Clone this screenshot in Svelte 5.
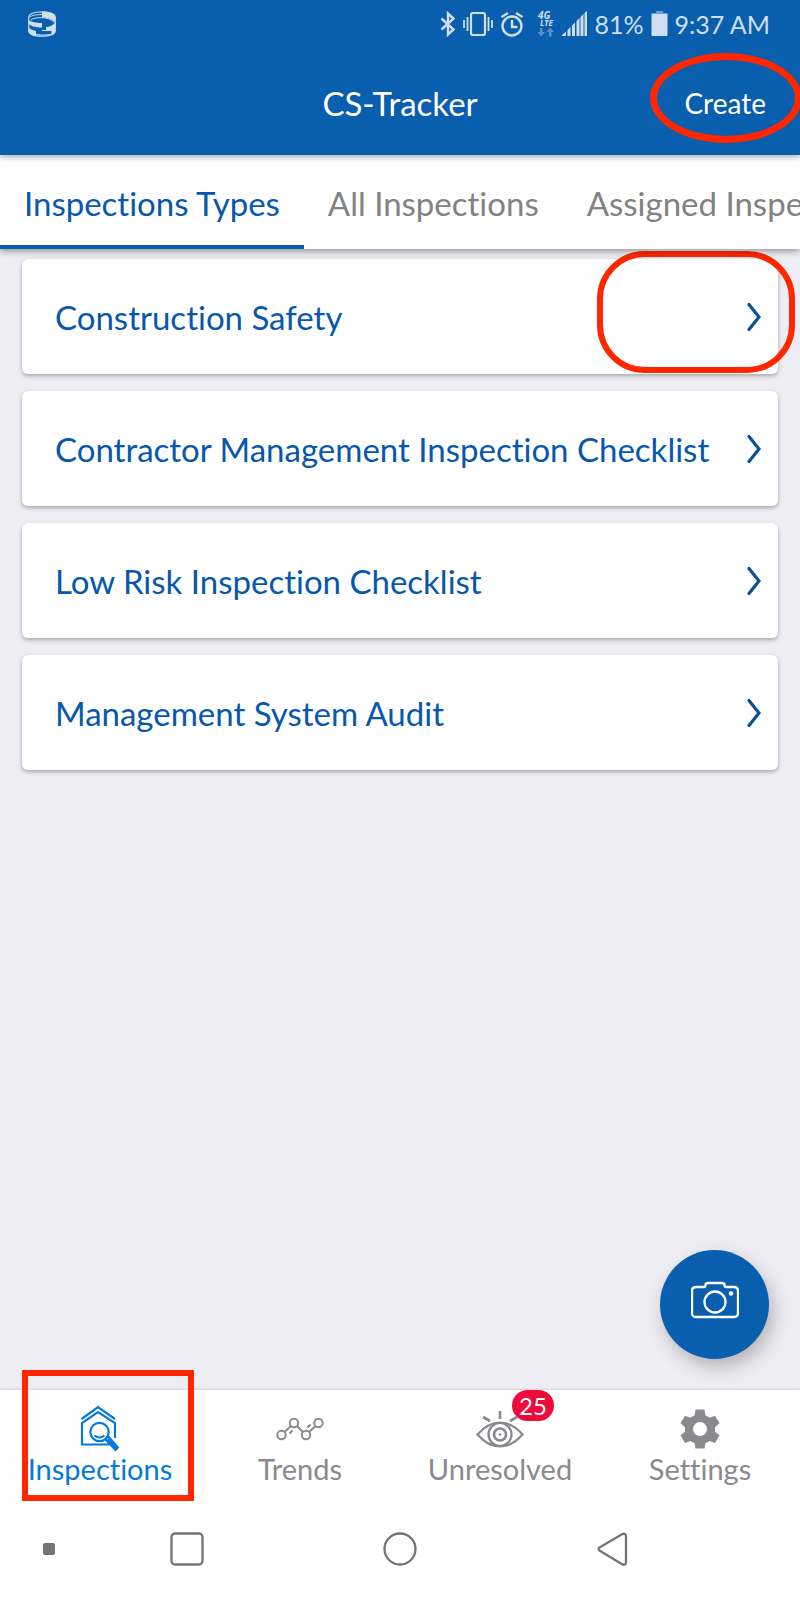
<script>
  const tabs = ["Inspections Types", "All Inspections", "Assigned Inspections"];

  const types = [
    "Construction Safety",
    "Contractor Management Inspection Checklist",
    "Low Risk Inspection Checklist",
    "Management System Audit",
  ];

  let activeTab = $state(0);
</script>

<div class="app">
  <header class="header">
    <div class="status">
      <svg width="28" height="26" viewBox="0 0 28 26" fill="none">
        <path
          d="M.8 6.500v13C.8 23 6 25.200 14 25.200S27.200 23 27.200 19.500v-13C27.200 3 22 .8 14 .8S.8 3 .8 6.500z"
          stroke="currentColor"
          stroke-width="1.200" />
        <path
          d="M14 .5c8 0 13.500 2.500 13.500 6V12C26 9 21 6.500 14 6.500zM.5 9C3 11 8 12 14 12v4.500C7 16.500 2 15 .5 12zM.5 16.500C3 19 6 19.500 8 20v5c-4-.5-7.500-2.500-7.500-5zM27.500 11v9c0 2.500-2 3.800-4 4.500V20H14v-1h4v-3q6 0 9.500-5z"
          fill="currentColor" />
        <path d="M3 9c3-3 17-4 23 2M2 6c2-2 6-2 12-2.500M8 23.500c6 .8 12 .8 16-.5" stroke="currentColor" />
      </svg>

      <div class="indicators">
        <svg width="16" height="26" viewBox="0 0 16 26" fill="none" stroke="currentColor" stroke-width="2.400">
          <path d="M1.500 7.500l12 11L8 23.500v-21l5.500 5-12 11" />
        </svg>
        <svg width="30" height="26" viewBox="0 0 30 26" fill="none" stroke="currentColor" stroke-width="2.200">
          <rect x="8" y="2" width="14" height="22" rx="2" />
          <path d="M4.500 6v14M1 9v8M25.500 6v14M29 9v8" stroke-width="1.800" />
        </svg>
        <svg width="24" height="26" viewBox="0 0 24 26" fill="none" stroke="currentColor" stroke-width="2.400">
          <circle cx="12" cy="15" r="9.500" />
          <path d="M12 9v7h5.500M1.500 6L8 2M22.500 6L16 2" />
        </svg>
        <svg class="network" width="24" height="26" viewBox="0 0 24 26" fill="currentColor">
          <text x="7" y="8" font-size="10">4G</text>
          <text x="9" y="15" font-size="8">LTE</text>
          <path d="M9 17h2.500v4h2.500l-3.800 4.500L6.500 21H9zM18 25.500h2.500V21H23L19.200 16.500 15.500 21H18z" opacity=".4" />
        </svg>
        <svg width="26" height="26" viewBox="0 0 26 26" fill="currentColor">
          <path d="M0 25v-1l4-3.500V25zM5.500 25v-6l3-3v9zM10 25V14.500l3-3V25zM14.500 25V10l3-3v18zM18.500 25V6l3-3v22zM22.500 25V2L25 0v25z" />
        </svg>
        <span>81%</span>
        <svg width="17" height="26" viewBox="0 0 17 26" fill="currentColor">
          <path d="M5 0h7v2h4.500v2H.5V2H5z" opacity=".5" />
          <rect x=".5" y="3" width="16" height="22" rx="1" />
        </svg>
        <span>9:37 AM</span>
      </div>
    </div>

    <div class="titlebar">
      <h1>CS-Tracker</h1>
      <button class="create">Create</button>
    </div>
  </header>

  <nav class="tabs">
    {#each tabs as tab, i}
      <button class="tab" class:active={activeTab === i} onclick={() => (activeTab = i)}>{tab}</button>
    {/each}
  </nav>

  <main class="content">
    <ul class="list">
      {#each types as type, i}
        <li>
          <button class="card" class:marked={i === 0}>
            <span>{type}</span>
            <svg width="14" height="30" viewBox="0 0 14 30" fill="none">
              <path d="M2 2.500L12 15 2 27.500" stroke="#0a4f98" stroke-width="3.200" stroke-linecap="round" />
            </svg>
          </button>
        </li>
      {/each}
    </ul>

    <button class="camera" aria-label="Take photo">
      <svg width="48" height="38" viewBox="0 0 48 38" fill="none" stroke="#fff" stroke-width="2.300">
        <path d="M5 6h8q1.500 0 1.500-2T17 2h14q2.500 0 2.500 2T35 6h8q4 0 4 4v22q0 4-4 4H5q-4 0-4-4V10q0-4 4-4z" />
        <circle cx="24" cy="21" r="10.500" />
        <circle cx="40" cy="12.500" r="2.300" fill="#fff" stroke="none" />
      </svg>
    </button>
  </main>

  <nav class="bottom">
    <a class="item current" href="#inspections">
      <svg width="48" height="48" viewBox="0 0 48 48" fill="none" stroke="currentColor" stroke-width="2.200">
        <path d="M5.500 15L22 3l17 12M33 40.500H6V19L22 8l17 11v15" />
        <circle cx="23.500" cy="28" r="9.200" />
        <path d="M18.500 31.500q5 4 10 0M30 34.500l2.200-2.200L42 43.500 39.500 46 29 35M32 35l8 9" stroke-width="2" />
      </svg>
      <span>Inspections</span>
    </a>
    <a class="item" href="#trends">
      <svg width="48" height="48" viewBox="0 0 48 48" fill="none" stroke="currentColor" stroke-width="2">
        <circle cx="5.500" cy="31" r="4.200" />
        <circle cx="18" cy="19" r="4.200" />
        <circle cx="30" cy="31" r="4.200" />
        <circle cx="42.500" cy="19" r="4.200" />
        <path d="M8.500 28L15 22M21 22l6 6M33 28l6.500-6M13.500 29.500l3-3M31.500 23.500l3-3" />
      </svg>
      <span>Trends</span>
    </a>
    <a class="item" href="#unresolved">
      <svg width="48" height="48" viewBox="0 0 48 48" fill="none" stroke="currentColor" stroke-width="2.200">
        <path d="M1.500 30.500Q12 18.500 24 18.500t22.500 12Q36 42.500 24 42.500T1.500 30.500z" />
        <circle cx="24" cy="30.500" r="11.500" />
        <circle cx="24" cy="30.500" r="6" stroke-width="2.600" />
        <circle cx="24" cy="30.500" r="1.300" fill="currentColor" stroke="none" />
        <path d="M24 7v8M7 13l7 4M41 13l-7 4" stroke-width="2.600" />
      </svg>
      <b class="badge">25</b>
      <span>Unresolved</span>
    </a>
    <a class="item" href="#settings">
      <svg width="48" height="48" viewBox="0 0 48 48">
        <path
          fill="currentColor"
          fill-rule="evenodd"
          d="M19.500 5.500h9l1 6q2 .7 4 2.200l5.500-2 4.500 7.500-4.500 4q.3 2.100 0 4.300l4.500 3.800-4.500 7.600-5.500-2q-2 1.500-4 2.200l-1 5.400h-9l-1-5.400q-2-.7-4-2.200l-5.500 2-4.500-7.600L9 27.500q-.3-2.200 0-4.300l-4.500-4L9 11.700l5.500 2q2-1.500 4-2.200zM24 18a7 7 0 100 14 7 7 0 000-14z" />
      </svg>
      <span>Settings</span>
    </a>
  </nav>

  <div class="system">
    <i class="dot"></i>
    <button aria-label="Recent apps">
      <svg width="34" height="34" viewBox="0 0 34 34"><rect x="1.500" y="1.500" width="31" height="31" rx="3.500" /></svg>
    </button>
    <button aria-label="Home">
      <svg width="34" height="34" viewBox="0 0 34 34"><circle cx="17" cy="17" r="15.500" /></svg>
    </button>
    <button aria-label="Back">
      <svg width="34" height="34" viewBox="0 0 34 34">
        <path d="M3.500 15.500L26 2.200q4-1.500 4 2v26q0 3.500-4 2L3.500 18.500q-2-1.500 0-3z" />
      </svg>
    </button>
  </div>
</div>

<style>
  :global(body) {
    margin: 0;
  }

  .app {
    --main-color: #0a5eae;
    --marker-color: #ff2600;

    display: flex;
    flex-direction: column;

    min-height: 100vh;
    overflow: hidden;

    font-family: Lato, "Liberation Sans", sans-serif;
    font-variant-ligatures: none;

    background: #eeedf3;
  }

  button {
    padding: 0;
    border: none;

    font: inherit;
    font-variant-ligatures: none;
    color: inherit;

    background: none;
    cursor: pointer;
  }

  svg {
    flex-shrink: 0;
  }

  .header {
    position: relative;
    z-index: 2;

    color: #fff;
    background: var(--main-color);
    box-shadow: 0 2px 6px rgba(0, 0, 0, 0.35);
  }

  .status {
    display: flex;
    justify-content: space-between;
    align-items: center;

    height: 48px;
    padding: 0 30px 0 28px;

    font-size: 25px;
    color: #cfdff0;
  }

  .indicators {
    display: flex;
    align-items: center;
    gap: 7px;
  }

  .network {
    overflow: visible;

    font-family: "Open Sans", sans-serif;
    font-weight: 700;
    font-style: italic;
  }

  .titlebar {
    display: grid;
    grid-template-columns: 1fr auto 1fr;
    align-items: center;

    height: 105px;
    padding: 2px 34px 0;
  }

  h1 {
    grid-column: 2;
    margin: 0;

    font-size: 33px;
    font-weight: 400;
  }

  .create {
    position: relative;
    justify-self: end;

    font-size: 28px;
    line-height: 34px;
  }

  /* highlight rings */
  .create::after,
  .marked::after,
  .current::after {
    content: "";
    position: absolute;

    box-sizing: border-box;
    border: 6px solid var(--marker-color);

    pointer-events: none;
  }

  .create::after {
    top: -33px;
    right: -36px;

    width: 152px;
    height: 90px;

    border-width: 7px;
    border-radius: 50%;
  }

  .tabs {
    position: relative;
    z-index: 1;
    display: flex;

    height: 94px;

    background: #fff;
    box-shadow: 0 2px 7px rgba(0, 0, 0, 0.4);
  }

  .tab {
    flex-shrink: 0;
    padding: 6px 24px 0;

    border-bottom: 4px solid transparent;

    font-size: 33px;
    white-space: nowrap;

    color: #828282;
  }

  .tab.active {
    color: #0757ac;
    border-color: var(--main-color);
  }

  .content {
    position: relative;
    flex: 1;

    padding: 10px 22px;
  }

  .list {
    display: flex;
    flex-direction: column;
    gap: 17px;

    margin: 0;
    padding: 0;

    list-style: none;
  }

  .card {
    position: relative;
    display: flex;
    justify-content: space-between;
    align-items: center;

    width: 100%;
    height: 115px;
    padding: 0 17px 0 33px;

    border-radius: 6px;

    font-size: 33px;
    text-align: left;

    color: #0757ac;
    background: #fff;
    box-shadow: 0 2px 4px rgba(0, 0, 0, 0.3);
  }

  .marked::after {
    top: -8px;
    right: -17px;

    width: 198px;
    height: 122px;

    border-radius: 48px;
  }

  .camera {
    position: absolute;
    right: 31px;
    bottom: 31px;
    display: flex;
    justify-content: center;
    align-items: center;

    width: 109px;
    height: 109px;
    padding-bottom: 10px;

    border-radius: 50%;

    background: var(--main-color);
    box-shadow: 4px 8px 18px rgba(0, 0, 0, 0.25);
  }

  .bottom {
    position: relative;
    display: grid;
    grid-template-columns: repeat(4, 1fr);

    height: 120px;

    background: #fff;
    box-shadow: 0 -1px 2px rgba(0, 0, 0, 0.1);
  }

  .item {
    position: relative;
    display: flex;
    flex-direction: column;
    align-items: center;

    padding-top: 14px;

    font-size: 29px;
    line-height: 34px;
    text-decoration: none;

    color: #8a898e;
  }

  .current {
    color: #0579de;
  }

  .current::after {
    top: -20px;
    left: 22px;

    width: 172px;
    height: 131px;
  }

  .badge {
    position: absolute;
    top: 0;
    left: calc(50% + 12px);

    width: 42px;

    border-radius: 16px;

    font-size: 24px;
    font-weight: 400;
    line-height: 31px;
    text-align: center;

    color: #fff;
    background: #f00a3c;
  }

  .system {
    display: grid;
    grid-template-columns: 80px repeat(3, 1fr) 80px;
    align-items: center;
    justify-items: center;

    height: 90px;
    padding-bottom: 12px;
    box-sizing: border-box;

    background: #fff;
  }

  .system svg {
    display: block;

    fill: none;
    stroke: #747474;
    stroke-width: 2.3;
  }

  .dot {
    width: 12px;
    height: 12px;
    margin-left: 18px;

    border-radius: 2px;

    background: #747474;
  }
</style>
